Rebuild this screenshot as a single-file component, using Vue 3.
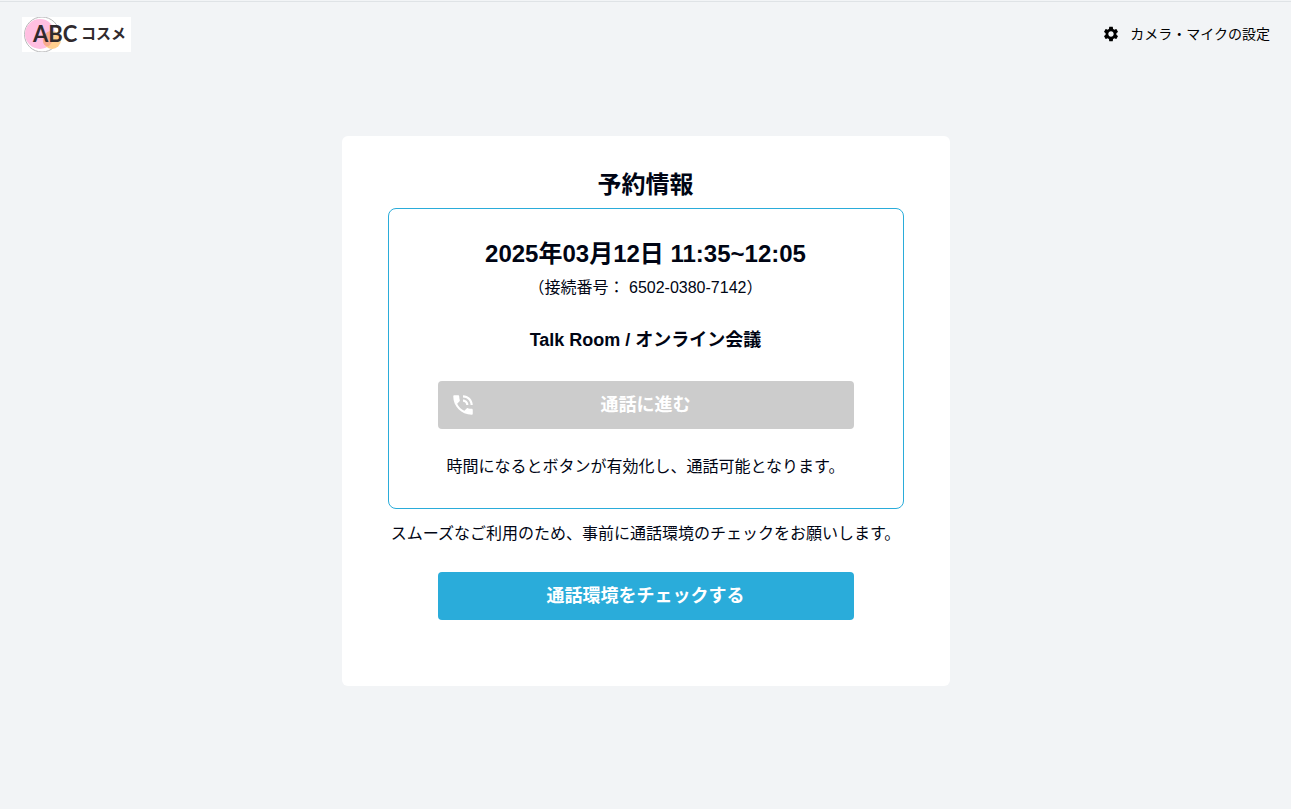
<template>
  <div class="page">
    <header class="header">
      <a class="logo" href="#" aria-label="ABCコスメ">
        <svg width="109" height="35" viewBox="0 0 109 35">
          <rect width="109" height="35" fill="#fff" />
          <circle cx="20" cy="17.5" r="17.5" fill="none" stroke="#b9b9bb" stroke-width="1" />
          <circle cx="18" cy="17" r="15" fill="#ffbfe1" />
          <circle cx="30" cy="23" r="9" fill="#ffcf8f" />
          <path d="M22.5 28a9 9 0 0 1 8.5-14a15 15 0 0 1-4.500 15.400a9 9 0 0 1-4-1.400z" fill="#f8ab8f" />
          <text class="logo-latin" x="11" y="25">ABC</text>
          <text class="logo-kana" x="59" y="22">コスメ</text>
        </svg>
      </a>
      <button type="button" class="settings">
        <svg class="settings-icon" viewBox="0 0 24 24">
          <path d="M19.140 12.940c.04-.3.060-.61.060-.94 0-.32-.02-.64-.07-.94l2.030-1.580c.18-.14.23-.41.120-.61l-1.920-3.320c-.12-.22-.37-.29-.59-.22l-2.390.96c-.5-.38-1.030-.7-1.620-.94l-.36-2.540c-.04-.24-.24-.41-.48-.41h-3.840c-.24 0-.43.170-.47.410l-.36 2.540c-.59.240-1.130.570-1.620.940l-2.390-.96c-.22-.08-.47 0-.59.220L2.740 8.870c-.12.210-.08.470.120.610l2.030 1.580c-.05.300-.09.630-.09.940s.020.640.070.940l-2.030 1.580c-.18.140-.23.410-.12.610l1.920 3.320c.120.220.370.290.590.220l2.390-.96c.500.380 1.030.700 1.620.940l.360 2.540c.050.240.240.410.480.410h3.840c.240 0 .440-.17.470-.41l.360-2.540c.590-.24 1.130-.56 1.620-.94l2.390.960c.220.080.470 0 .590-.22l1.920-3.320c.120-.22.070-.47-.12-.61l-2.010-1.580zM12 15.600c-1.980 0-3.600-1.620-3.600-3.600s1.620-3.600 3.600-3.600 3.600 1.620 3.600 3.600-1.620 3.600-3.600 3.600z" />
        </svg>
        <span>カメラ・マイクの設定</span>
      </button>
    </header>

    <main class="card">
      <h1 class="title">予約情報</h1>
      <section class="reservation">
        <h2 class="date">{{ reservation.date }} {{ reservation.time }}</h2>
        <p class="number">（接続番号： {{ reservation.number }}）</p>
        <h3 class="room">{{ reservation.room }}</h3>
        <button type="button" class="btn btn-call" disabled>
          <svg class="call-icon" viewBox="0 0 24 24">
            <path d="M20 15.500c-1.250 0-2.450-.2-3.570-.57-.1-.03-.21-.05-.31-.05-.26 0-.51.100-.71.290l-2.200 2.200c-2.830-1.440-5.150-3.750-6.590-6.590l2.200-2.210c.280-.26.360-.65.250-1C8.700 6.450 8.500 5.250 8.500 4c0-.55-.45-1-1-1H4c-.55 0-1 .450-1 1 0 9.390 7.610 17 17 17 .550 0 1-.45 1-1v-3.500c0-.55-.45-1-1-1zM19 12h2c0-4.970-4.030-9-9-9v2c3.870 0 7 3.130 7 7zm-4 0h2c0-2.760-2.240-5-5-5v2c1.660 0 3 1.340 3 3z" />
          </svg>
          通話に進む
        </button>
        <p class="note">時間になるとボタンが有効化し、通話可能となります。</p>
      </section>
      <p class="guide">スムーズなご利用のため、事前に通話環境のチェックをお願いします。</p>
      <button type="button" class="btn btn-check">通話環境をチェックする</button>
    </main>
  </div>
</template>

<script setup>
const reservation = {
  date: '2025年03月12日',
  time: '11:35~12:05',
  number: '6502-0380-7142',
  room: 'Talk Room / オンライン会議'
}
</script>

<style>
body {
  margin: 0;
  background: #f2f4f6;
}
</style>

<style scoped>
.page {
  min-height: 100vh;
  box-sizing: border-box;
  padding-top: 1px;
  color: #000514;
  font-family: "Liberation Sans", "Noto Sans CJK JP", sans-serif;
  font-size: 16px;
  line-height: 24px;
}

.header {
  display: flex;
  align-items: flex-start;
  justify-content: space-between;
  padding: 15px 21px 16px 22px;
  border-top: 1px solid #dfe3e6;
}

.logo,
.logo svg {
  display: block;
}

.logo-latin {
  font: bold 22px Lato, sans-serif;
  fill: #302a2d;
}

.logo-kana {
  font: bold 15px "Noto Sans CJK JP", sans-serif;
  fill: #302a2d;
}

.settings {
  display: flex;
  align-items: center;
  gap: 10px;
  padding: 0;
  border: 0;
  background: none;
  color: #000;
  font-family: inherit;
  font-size: 14px;
  line-height: 34px;
  cursor: pointer;
}

.settings-icon {
  width: 18px;
  height: 18px;
  fill: currentColor;
}

.card {
  box-sizing: border-box;
  max-width: 608px;
  margin: 68px auto 0;
  padding: 31px 46px 66px;
  border-radius: 6px;
  background: #fff;
  text-align: center;
}

.title,
.date {
  margin: 0;
  font-size: 24px;
  line-height: 36px;
}

.title {
  margin-bottom: 5px;
}

.reservation {
  padding: 27px 49px 29px;
  border: 1px solid #2aacda;
  border-radius: 8px;
}

.number,
.note,
.guide {
  margin: 0;
}

.number {
  margin-top: 4px;
}

.room {
  margin: 28px 0 29px;
  font-size: 18px;
  line-height: 24px;
}

.btn {
  position: relative;
  display: block;
  width: 100%;
  height: 48px;
  padding: 0;
  border: 0;
  border-radius: 4px;
  color: #fff;
  font-family: inherit;
  font-size: 18px;
  font-weight: bold;
  line-height: 24px;
}

.btn-call {
  background: #cccccc;
}

.call-icon {
  position: absolute;
  top: 11px;
  left: 12px;
  width: 26px;
  height: 26px;
  fill: currentColor;
}

.btn-check {
  max-width: 416px;
  margin: 26px auto 0;
  background: #2aacda;
  cursor: pointer;
}

.note {
  margin-top: 26px;
}

.guide {
  margin-top: 13px;
}
</style>
